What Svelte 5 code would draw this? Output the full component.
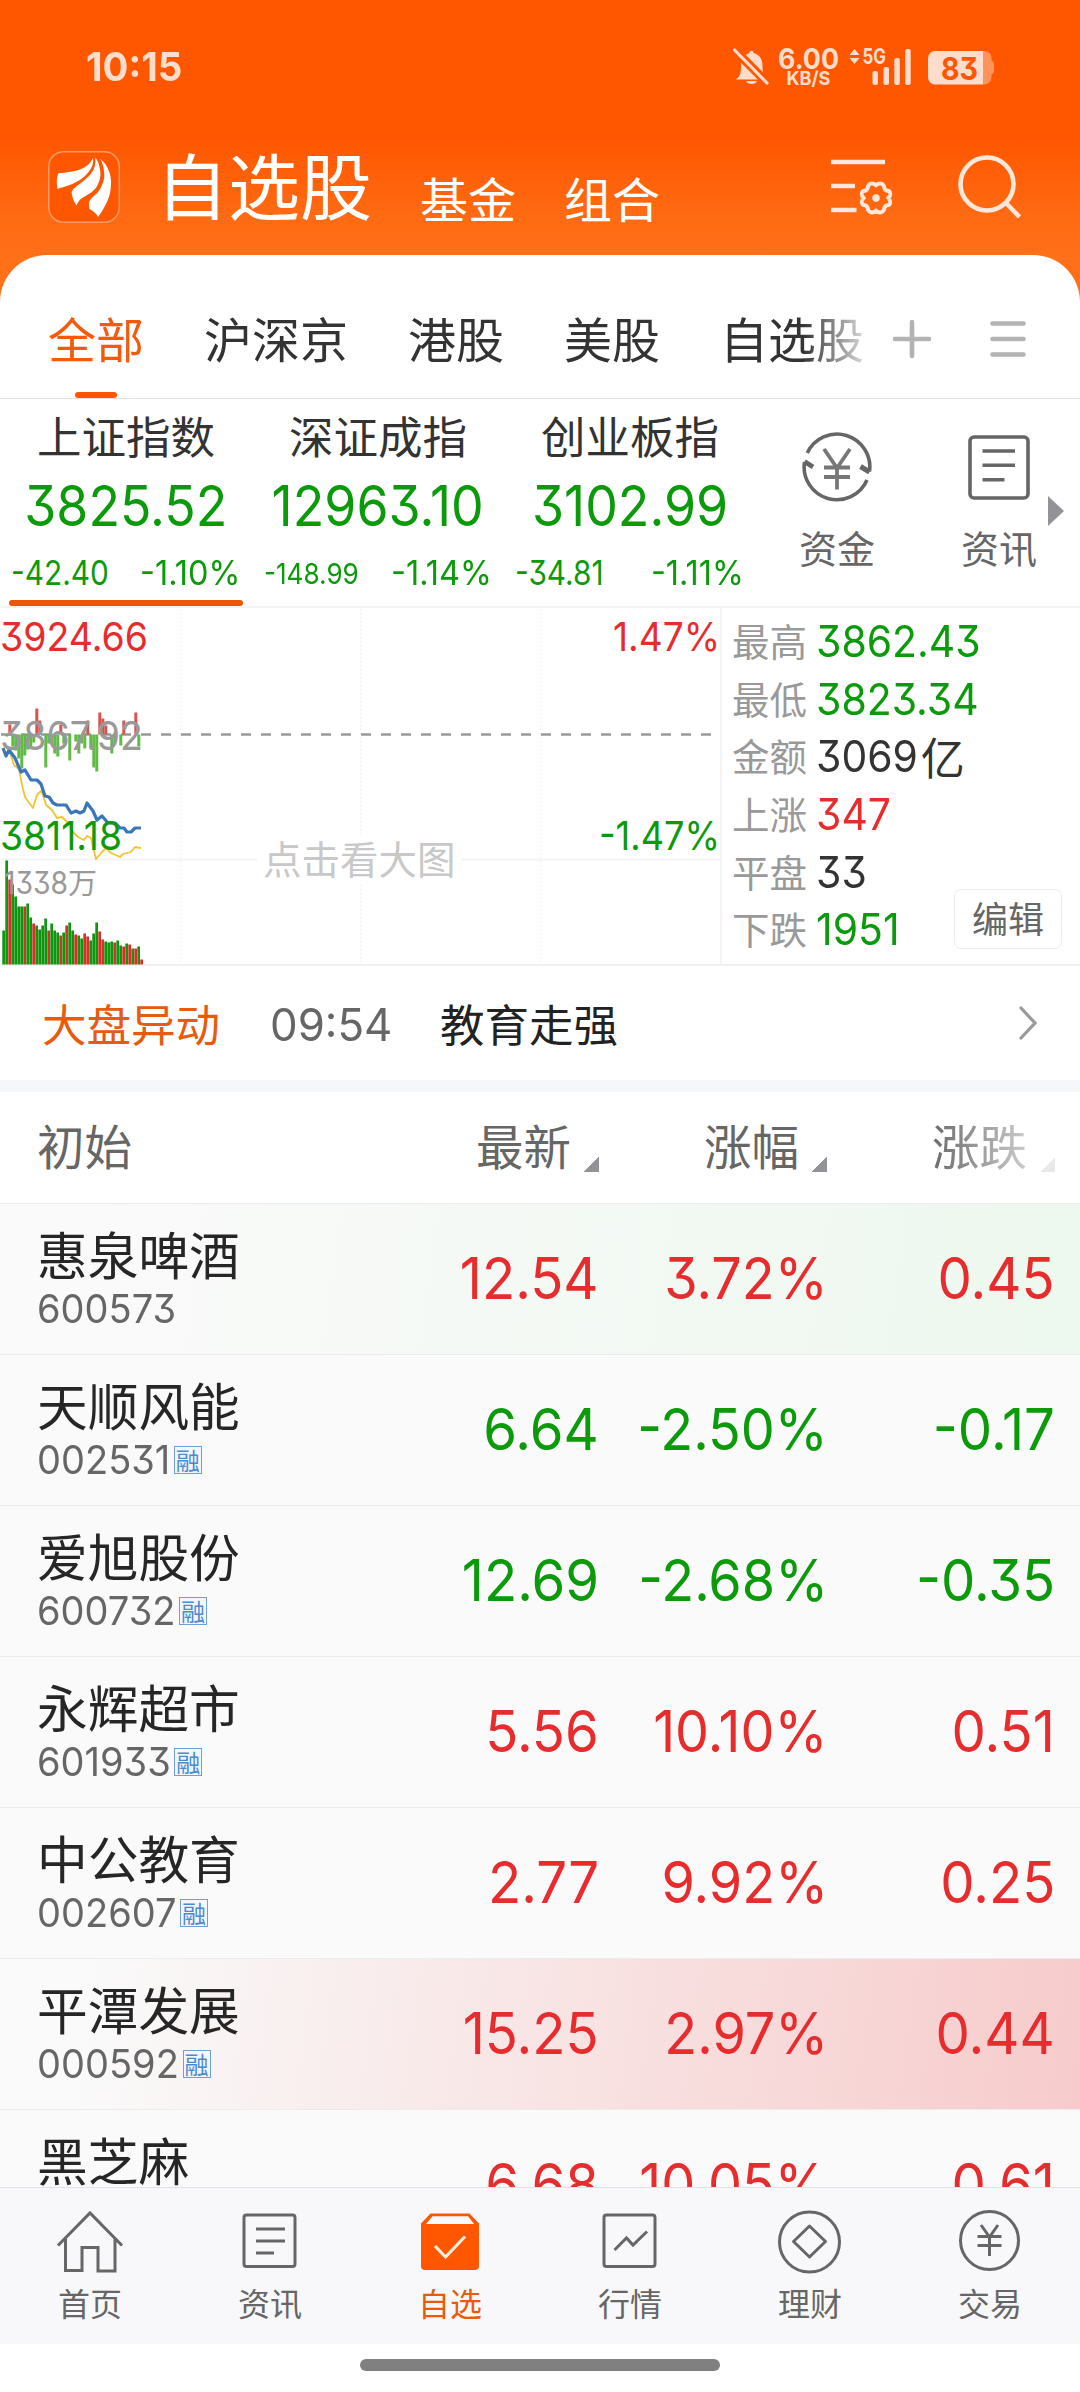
<script>
    const tabs = ['全部', '沪深京', '港股', '美股', '自选股']

    const indexes = [
        { name: '上证指数', value: '3825.52', diff: '-42.40', pct: '-1.10%' },
        { name: '深证成指', value: '12963.10', diff: '-148.99', pct: '-1.14%', small: true },
        { name: '创业板指', value: '3102.99', diff: '-34.81', pct: '-1.11%' }
    ]

    const stats = [
        { label: '最高', value: '3862.43', color: 'down' },
        { label: '最低', value: '3823.34', color: 'down' },
        { label: '金额', value: '3069', unit: '亿', color: 'flat' },
        { label: '上涨', value: '347', color: 'up' },
        { label: '平盘', value: '33', color: 'flat' },
        { label: '下跌', value: '1951', color: 'down' }
    ]

    const stocks = [
        { name: '惠泉啤酒', code: '600573', price: '12.54', pct: '3.72%', diff: '0.45', color: 'up', flash: 'flash-down' },
        { name: '天顺风能', code: '002531', margin: true, price: '6.64', pct: '-2.50%', diff: '-0.17', color: 'down' },
        { name: '爱旭股份', code: '600732', margin: true, price: '12.69', pct: '-2.68%', diff: '-0.35', color: 'down' },
        { name: '永辉超市', code: '601933', margin: true, price: '5.56', pct: '10.10%', diff: '0.51', color: 'up' },
        { name: '中公教育', code: '002607', margin: true, price: '2.77', pct: '9.92%', diff: '0.25', color: 'up' },
        { name: '平潭发展', code: '000592', margin: true, price: '15.25', pct: '2.97%', diff: '0.44', color: 'up', flash: 'flash-up' },
        { name: '黑芝麻', price: '6.68', pct: '10.05%', diff: '0.61', color: 'up' }
    ]

    // one bar per minute: height, negative = red
    const volume = [
        34, 104, -85, 80, 68, 58, 58, -58, 61, 47, -41, 39, 35, 39, 46, -34, 41, 34, 32, -29, 32, -39, 42, 34,
        -30, 29, 26, -31, -28, 24, 31, 42, -33, -25, 23, 22, 23, -22, 24, 19, -18, 21, -20, 16, -16, 18, -5
    ]

    // buy / sell strength around the zero line
    const strength = [
        0, -2, 10, -12, -16, -24, -34, -21, -15, -14, -8, 26, 14, 0, -33, -9, -9, -19, -22, 10, -9, 0, -26, 0,
        -7, -19, -9, -14, 14, -12, -33, -37, 22, 16, 9, 0, -19, -9, 0, -11, 14, 0, 0, 0, 22, -12, 0
    ]
    const zero = 127.5

    const priceLine = '3,141 6,149 9,143 15,151 21,165 25,163 31,173 37,173 41,177 45,189 49,190 53,196 57,198 66,198 71,206 76,204 80,206 84,204 87,196 93,204 97,213 102,209 108,216 115,216 120,221 124,221 127,225 131,225 135,221 141,221'
    const avgLine = '3,141 6,148 10,145 14,158 19,162 22,178 25,190 33,201 37,188 41,184 43,188 46,198 52,203 57,211 62,210 67,215 72,224 78,230 84,233 87,229 91,231 96,252 102,245 106,241 111,246 120,250 123,247 131,245 135,240 141,241'
</script>

<div class="app">
    <div class="status">
        <span class="num clock">10:15</span>
        <svg class="status-icons" width="270" height="44" viewBox="730 45 270 44">
            <g fill="#ffddcc">
                <path d="M736 79.500c4-3 5-6 5-13c0-7 3.500-12 8.500-13.500c0-3 4-3 4 0c6 1.500 9 6 9 13c0 7 1 10.500 4 13.500z" />
                <path d="M746 81h11c-1.500 4-9.500 4-11 0z" />
                <path d="M733 48.500l35 35" stroke="#ff5600" stroke-width="9" />
                <path d="M734.500 50l32.500 33" stroke="#ffddcc" stroke-width="3.200" stroke-linecap="round" />
                <text x="778" y="69" font-size="28.500" font-weight="700" textLength="61" lengthAdjust="spacingAndGlyphs">6.00</text>
                <text x="786.500" y="85" font-size="19" font-weight="700" textLength="44" lengthAdjust="spacingAndGlyphs">KB/S</text>
                <path d="M849.500 55l5-6 5 6zM849.500 58l5 6 5-6z" />
                <text x="862.500" y="64" font-size="21.500" font-weight="700" textLength="23.500" lengthAdjust="spacingAndGlyphs">5G</text>
                <rect x="872.500" y="71" width="5.500" height="14" rx="2" />
                <rect x="883.500" y="67" width="5.500" height="18" rx="2" />
                <rect x="894.300" y="58" width="5.500" height="27" rx="2" />
                <rect x="905.200" y="49" width="5.500" height="36" rx="2" />
                <path d="M983 51h1.500a7 7 0 0 1 7 7v2.500q2.500 1 2.500 3v8q0 2-2.500 3v3a7 7 0 0 1-7 7H983z" opacity=".45" />
                <path d="M983 51v33.500h-48a7 7 0 0 1-7-7V58a7 7 0 0 1 7-7z" />
            </g>
            <text x="941" y="79.500" font-size="31" font-weight="700" fill="#ff5600" textLength="37" lengthAdjust="spacingAndGlyphs">83</text>
        </svg>
    </div>

    <header>
        <svg class="logo" width="72" height="72" viewBox="0 0 72 72">
            <rect x=".75" y=".75" width="70.500" height="70.500" rx="15" fill="#ff5600" stroke="#ff9a66" stroke-width="1.500" />
            <g fill="#fff">
                <path d="M45 7C42 13 39 15 34.700 17.300C27 21 18 21.500 10.500 22.300C8.500 26 8.500 32 9.500 38C14 36 19 35.500 24.300 33C30 30.500 34 28 38 24C43 19 46 13 45 7z" />
                <path d="M47.400 6.500C48 13 46.500 18 43.300 22.300C38 29 31 33 26 37.500Q23 40 23.800 43C24.500 47 26 51 28.500 54.500C30.500 50 32 48 36.400 45.700C42 42.500 46 40 48.400 36.300C52 30 53 25 52.200 20C51.500 14 50 10 47.400 6.500z" />
                <path d="M52.200 8C56 11 58.500 14 60.500 19Q63.500 26 63 34C62.500 41 61.500 46 58.500 52C56 57 53 62 50.100 66C48 62 45 60 41.500 58C40.500 54 40.500 51 42.500 48.500C45 45 49 43 51.500 39C55.500 32 57 27 56 20C55.500 15 54.500 12 52.200 8z" />
            </g>
        </svg>
        <h1>自选股</h1>
        <span class="sub">基金</span>
        <span class="sub">组合</span>
        <div class="actions">
            <svg width="64" height="64" viewBox="0 0 64 64" fill="none" stroke="#ffe8da" stroke-width="4.600">
                <path d="M1 8h54M1 32h24M1 56h25.500" />
                <path d="M46 31.200c3-2.600 6.500-2 7.800.600c.5 4 1.700 4.700 5.400 5.400c2 2.600 1.500 4-.8 6.800c2.300 2.800 2.800 4.200.8 6.800c-3.700.700-4.900 1.400-5.400 5.400c-1.300 2.600-4.800 3.200-7.800.600c-3 2.600-6.500 2-7.800-.6c-.5-4-1.700-4.700-5.400-5.400c-2-2.600-1.500-4 .8-6.800c-2.300-2.800-2.800-4.200-.8-6.800c3.700-.7 4.900-1.400 5.400-5.400c1.300-2.600 4.800-3.200 7.800-.6z" stroke-width="4" />
                <circle cx="46" cy="44" r="3.800" fill="#ffe8da" stroke="none" />
            </svg>
            <svg width="64" height="64" viewBox="0 0 64 64" fill="none" stroke="#ffe8da" stroke-width="4.600">
                <circle cx="30" cy="30" r="26.500" />
                <path d="M48.500 48.500l14 14.500" />
            </svg>
        </div>
    </header>

    <main>
        <nav class="tabs">
            <div class="tab-list">
                {#each tabs as tab, i}
                <span class="tab" class:active={i === 0}>{tab}</span>
                {/each}
            </div>
            <svg width="40" height="40" viewBox="0 0 40 40" stroke="#b3b3b3" stroke-width="4.600" stroke-linecap="round">
                <path d="M3 20h34M20 3v34" />
            </svg>
            <svg class="menu" width="40" height="40" viewBox="0 0 40 40" stroke="#b3b3b3" stroke-width="4.600" stroke-linecap="round">
                <path d="M4.500 4.500h31M4.500 20h31M4.500 35.500h31" />
            </svg>
        </nav>

        <section class="indexes">
            {#each indexes as item, i}
            <div class="index" class:current={i === 0}>
                <p class="index-name">{item.name}</p>
                <p class="index-value"><span class="num">{item.value}</span></p>
                <p class="index-change">
                    <span class="num left" class:small={item.small}>{item.diff}</span>
                    <span class="num right pct">{item.pct}</span>
                </p>
            </div>
            {/each}
            <div class="shortcut">
                <svg width="70" height="70" viewBox="0 0 70 70" fill="none" stroke="#666" stroke-width="3.600">
                    <path d="M5.300 21A32.800 32.800 0 0 1 67.500 39.500M65 48A32.800 32.800 0 0 1 2.500 30" />
                    <path d="M2.500 29.500l8.500 5.500M67.500 40l-9-5.500" stroke-width="5" />
                    <path d="M22 17l13 19 13-19M35 36v21.500M22 35.500h26M22 45h26" stroke="#777" stroke-width="3.800" />
                </svg>
                <p>资金</p>
            </div>
            <div class="shortcut">
                <svg width="70" height="70" viewBox="0 0 70 70" fill="none" stroke="#666" stroke-width="3.600">
                    <rect x="6" y="5" width="58" height="61" rx="4" />
                    <path d="M18.500 19h32.500M18.500 33.300h32.500M18.500 47.700h22" />
                </svg>
                <p>资讯</p>
            </div>
            <svg class="more" width="16" height="30" viewBox="0 0 16 30"><path d="M0 0l16 15-16 15z" fill="#929297" /></svg>
        </section>

        <section class="market">
            <svg class="chart" width="720" height="358" viewBox="0 0 720 358">
                <path d="M180.500 2v356M360.500 2v356M540.500 2v356" stroke="#e8e8e8" stroke-width="1" stroke-dasharray="1 3" />
                <path d="M1 252.500h719" stroke="#f3f3f3" stroke-width="2" />
                <path d="M1 127.500h711" stroke="#999" stroke-width="2.500" stroke-dasharray="10 10" />
                <rect x="257" y="230" width="204" height="47" fill="#fff" />
                <text class="cjk" x="263" y="267" font-size="38.500" fill="#c8c8c8">点击看大图</text>
                {#each strength as s, i}
                <rect x={2.3 + i * 3} y={s > 0 ? zero - s : zero} width="3" height={Math.abs(s)} fill={s > 0 ? '#d9534f' : '#5fba46'} />
                {/each}
                <polyline points={avgLine} fill="none" stroke="#f2c530" stroke-width="1.800" stroke-linejoin="round" />
                <polyline points={priceLine} fill="none" stroke="#3a76b8" stroke-width="3.200" stroke-linejoin="round" />
                {#each volume as v, i}
                <rect x={2.3 + i * 3} y={357.5 - Math.abs(v)} width="2.700" height={Math.abs(v)} fill={v < 0 ? '#dc2d26' : '#0f960f'} />
                {/each}
                <g font-size="40">
                    <text x="0" y="44" fill="#e62c2c" textLength="148" lengthAdjust="spacingAndGlyphs">3924.66</text>
                    <text x="0" y="143" fill="#999" textLength="143" lengthAdjust="spacingAndGlyphs">3867.92</text>
                    <text x="0" y="243" fill="#0a9a0a" textLength="122" lengthAdjust="spacingAndGlyphs">3811.18</text>
                    <text x="613" y="44" fill="#e62c2c" textLength="107" lengthAdjust="spacingAndGlyphs">1.47%</text>
                    <text x="599" y="243" fill="#0a9a0a" textLength="121" lengthAdjust="spacingAndGlyphs">-1.47%</text>
                    <text x="4" y="286.500" font-size="30.500" fill="#999" textLength="64" lengthAdjust="spacingAndGlyphs">1338</text>
                    <text class="cjk" x="68" y="286.500" font-size="29" fill="#999">万</text>
                </g>
            </svg>
            <div class="stats">
                {#each stats as stat}
                <div class="stat">
                    <span class="stat-label">{stat.label}</span>
                    <span class="num left {stat.color}">{stat.value}</span>
                    {#if stat.unit}<span class="unit">{stat.unit}</span>{/if}
                </div>
                {/each}
                <button>编辑</button>
            </div>
        </section>

        <section class="news">
            <span class="news-tag">大盘异动</span>
            <span class="news-time"><span class="num left">09:54</span></span>
            <span class="news-title">教育走强</span>
            <svg width="18" height="34" viewBox="0 0 18 34" fill="none" stroke="#999" stroke-width="3.200" stroke-linecap="round"><path d="M2 2l14 15L2 32" /></svg>
        </section>

        <section class="list">
            <div class="row list-head">
                <span class="first">初始</span>
                <span class="col">最新<i></i></span>
                <span class="col">涨幅<i></i></span>
                <span class="col fade">涨跌<i></i></span>
            </div>
            {#each stocks as stock}
            <div class="row stock {stock.flash}">
                <div class="first">
                    <p class="name">{stock.name}</p>
                    {#if stock.code}
                    <p class="code"><span class="num left">{stock.code}</span>{#if stock.margin}<b>融</b>{/if}</p>
                    {/if}
                </div>
                <span class="col {stock.color}"><span class="num right">{stock.price}</span></span>
                <span class="col {stock.color}"><span class="num right pct">{stock.pct}</span></span>
                <span class="col {stock.color}"><span class="num right">{stock.diff}</span></span>
            </div>
            {/each}
        </section>
    </main>

    <footer>
        <div class="nav-item">
            <svg width="70" height="64" viewBox="0 0 70 64" fill="none" stroke="#666" stroke-width="3">
                <path d="M3 35.500L35 3 67 35.500M10.500 29v31.500h16.500V37.500h16v23.500H60V29" />
            </svg>
            <span>首页</span>
        </div>
        <div class="nav-item">
            <svg width="70" height="64" viewBox="0 0 70 64" fill="none" stroke="#666" stroke-width="3">
                <rect x="9" y="5" width="51" height="51.500" rx="2.500" />
                <path d="M21 19h29M21 31h29M21 43h18" />
            </svg>
            <span>资讯</span>
        </div>
        <div class="nav-item active">
            <svg width="70" height="64" viewBox="0 0 70 64">
                <path d="M15.500 3.500h39L64 13.500V56a4 4 0 0 1-4 4H10a4 4 0 0 1-4-4V13.500z" fill="#ff5600" />
                <path d="M17.500 6.300h35.500l6 7.700H11z" fill="#fafafc" />
                <path d="M20 36l10.500 11L50 26.500" fill="none" stroke="#ffeedd" stroke-width="3.200" />
            </svg>
            <span>自选</span>
        </div>
        <div class="nav-item">
            <svg width="70" height="64" viewBox="0 0 70 64" fill="none" stroke="#666" stroke-width="3">
                <rect x="9" y="5" width="51" height="51.500" rx="2.500" />
                <path d="M19.500 40L31.500 28l6.500 7L52 21.500" />
            </svg>
            <span>行情</span>
        </div>
        <div class="nav-item">
            <svg width="70" height="64" viewBox="0 0 70 64" fill="none" stroke="#666" stroke-width="3">
                <circle cx="34.500" cy="32" r="30" />
                <path d="M34.500 16l16 15.500-16 15.500-16-15.500z" stroke-linejoin="round" />
            </svg>
            <span>理财</span>
        </div>
        <div class="nav-item">
            <svg width="70" height="64" viewBox="0 0 70 64" fill="none" stroke="#666" stroke-width="3">
                <circle cx="34.500" cy="30.500" r="29" />
                <path d="M26 15l8.500 12 8.500-12M34.500 26v20M22.500 26.500h24M22.500 35.500h24" />
            </svg>
            <span>交易</span>
        </div>
    </footer>
    <div class="home-bar"><i></i></div>
</div>

<style>
:global(body) {
    margin:0;
    background:#fff;
}
.app {
    width:1080px;
    height:2392px;
    display:flex;
    flex-direction:column;
    overflow:hidden;
    font-family:"Noto Sans CJK SC", sans-serif;
    color:#333;
    background:linear-gradient(#ff5600 0, #ff5600 135px, #ff6a12 215px, #ff7019 256px);
}
p, h1 {
    margin:0;
    font-weight:400;
}
svg {
    display:block;
    flex:none;
}
svg text {
    font-family:Inter, sans-serif;
    font-feature-settings:"cv09";
}
svg text.cjk {
    font-family:"Noto Sans CJK SC", sans-serif;
}
/* slim figures with a flat-topped three */
.num {
    display:inline-block;
    font-family:Inter, sans-serif;
    font-feature-settings:"cv09";
    transform:scaleX(.93);
}
.left { transform-origin:0 50%; }
.right { transform-origin:100% 50%; }
.up { color:#e62c2c; }
.down { color:#0a9a0a; }
.flat { color:#333; }

.status {
    height:134px;
    box-sizing:border-box;
    padding:45px 80px 0 86px;
    display:flex;
    justify-content:space-between;
}
.clock {
    font-size:40px;
    line-height:44px;
    font-weight:700;
    color:#ffddcc;
    transform:scaleX(.96);
    transform-origin:0 50%;
}
header {
    height:121px;
    box-sizing:border-box;
    padding:0 59px 15px 48px;
    display:flex;
    align-items:center;
    color:#fff;
}
h1 {
    margin-left:36px;
    font-size:72px;
    line-height:96px;
    padding-bottom:8px;
}
.sub {
    margin-left:48px;
    font-size:48px;
    line-height:60px;
    padding-top:19px;
}
.actions {
    margin-left:auto;
    padding-bottom:2px;
    display:flex;
    gap:63px;
}
main {
    flex:1;
    min-height:0;
    overflow:hidden;
    background:#fff;
    border-radius:47px 47px 0 0;
}
.tabs {
    height:143px;
    padding:0 50px 0 48px;
    border-bottom:1px solid #e2e2e2;
    display:flex;
    align-items:center;
}
.tab-list {
    width:818px;
    margin-right:26px;
    height:143px;
    overflow:hidden;
    display:flex;
    gap:60px;
    mask-image:linear-gradient(90deg, #000 755px, transparent 830px);
}
.tabs svg { margin-top:24px; }
.tabs .menu { margin-left:56px; }
.tab {
    height:143px;
    box-sizing:border-box;
    padding-top:48px;
    font-size:48px;
    line-height:68px;
    flex:none;
    white-space:nowrap;
}
.tab.active {
    color:#f55a0c;
    display:flex;
    flex-direction:column;
    align-items:center;
    justify-content:space-between;
}
.tab.active::after {
    content:"";
    width:42px;
    height:6px;
    border-radius:3px;
    background:#ff5600;
}
.indexes {
    height:207px;
    border-bottom:2px solid #f3f3f3;
    display:flex;
    position:relative;
}
.index {
    width:252px;
    box-sizing:border-box;
    padding:5px 12px 0;
    text-align:center;
    position:relative;
}
.index.current::after {
    content:"";
    position:absolute;
    left:9px;
    right:9px;
    bottom:0;
    height:6px;
    border-radius:3px;
    background:#ee5500;
}
.index-name {
    font-size:44.500px;
    line-height:62px;
}
.index-value {
    font-size:56px;
    line-height:72px;
    margin:0 -12px;
    color:#0a9a0a;
}
.index-value .num { transform:scaleX(.925); }
.index-change {
    display:flex;
    justify-content:space-between;
    font-size:33.500px;
    line-height:63px;
    color:#0a9a0a;
}
.index-change .num { transform:translateX(-1px) scaleX(.89); }
.index-change .pct { transform:scaleX(.97); }
.index-change .small { font-size:29px; transform:scaleX(.9); }
.shortcut {
    width:162px;
    padding-top:33px;
    display:flex;
    flex-direction:column;
    align-items:center;
    font-size:38px;
    line-height:54px;
    color:#666;
}
.shortcut p { margin-top:18px; }
.more {
    position:absolute;
    left:1048px;
    top:97px;
}
.market {
    height:356px;
    border-bottom:2px solid #f0f0f0;
    display:flex;
}
.chart { margin-top:-1px; }
.stats {
    width:360px;
    box-sizing:border-box;
    border-left:2px solid #f3f3f3;
    padding:5px 0 0 10px;
    position:relative;
}
.stat {
    height:57.600px;
    display:flex;
    align-items:center;
    font-size:44px;
    line-height:57px;
}
.stat-label {
    width:84px;
    margin-top:-4px;
    font-size:37.500px;
    color:#999;
}
.unit { margin-left:-5px; }
button {
    position:absolute;
    right:18px;
    bottom:15px;
    width:108px;
    height:60px;
    padding:0 0 4px;
    border:1.500px solid #ececec;
    border-radius:7px;
    background:#fff;
    color:#666;
    font:36px "Noto Sans CJK SC", sans-serif;
}
.news {
    height:114px;
    padding:0 43px 0 42px;
    border-bottom:12px solid #f6f7fa;
    display:flex;
    align-items:center;
    font-size:44.500px;
    line-height:60px;
}
.news-tag {
    width:228px;
    color:#e85a0c;
}
.news-time {
    width:170px;
    color:#666;
}
.news-time .num { transform:scaleX(.985); }
.news-title { color:#222; }
.news svg { margin-left:auto; }
.row {
    display:flex;
    height:150px;
    border-bottom:1px solid #ececec;
}
.first {
    width:371px;
    padding-left:37px;
    box-sizing:border-box;
}
.col {
    width:228px;
    text-align:right;
    white-space:nowrap;
    display:flex;
    justify-content:flex-end;
}
.list-head {
    height:111px;
    font-size:47.500px;
    line-height:105px;
    color:#666;
}
.list-head i {
    width:15px;
    height:15px;
    margin:65px 0 0 13px;
    background:linear-gradient(135deg, transparent 50%, #929297 50%);
}
.fade { mask-image:linear-gradient(90deg, #000 100px, rgba(0,0,0,.2) 220px); }
.stock {
    background:#fafafa;
    font-size:58px;
    line-height:148px;
}
.stock .col .num { transform:scaleX(.94); }
.stock .col .pct { transform:translateX(1px) scaleX(.93); }
.flash-down { background:linear-gradient(98deg, #fafafa 8%, #edf8ee); }
.flash-up { background:linear-gradient(98deg, #fafafa 8%, #f7cbcb); }
.name {
    margin-top:14px;
    font-size:50.700px;
    line-height:70px;
    color:#262626;
}
.code {
    margin-top:1px;
    display:flex;
    align-items:center;
    font-size:39px;
    line-height:40px;
    color:#666;
}
.code .num { transform:scaleX(.975); }
.code b {
    width:26px;
    height:26px;
    border:1.500px solid #6ba0d8;
    background:#f3f7fd;
    color:#4a8ad0;
    font-size:24px;
    line-height:26px;
    font-weight:400;
    text-align:center;
}
footer {
    height:156px;
    border-top:1px solid #e2e2e4;
    background:#f8f8fa;
    display:flex;
}
.nav-item {
    width:180px;
    padding-top:22px;
    display:flex;
    flex-direction:column;
    align-items:center;
    font-size:32px;
    line-height:44px;
    color:#666;
}
.nav-item span { margin-top:6px; }
.nav-item.active { color:#e85a0c; }
.home-bar {
    height:48px;
    background:#fff;
    display:flex;
    justify-content:center;
}
.home-bar i {
    width:360px;
    height:12px;
    margin-top:15px;
    border-radius:6px;
    background:#808080;
}
</style>
